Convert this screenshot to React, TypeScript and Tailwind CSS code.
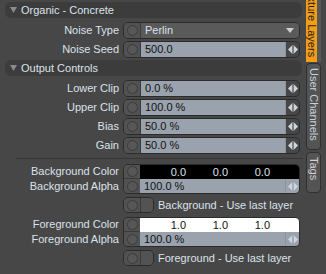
import React from "react";

function CircleBtn({ h = "h-full", last = true }: { h?: string; last?: boolean }) {
  return (
    <div className={`flex ${h} w-[16px] items-center justify-center bg-[#525252] ${last ? "" : "border-b border-[#3a3a3a]"}`}>
      <div className="h-[11px] w-[11px] rounded-full border border-[#3b3b3b] bg-[#575757]" />
    </div>
  );
}

function Arrows() {
  return (
    <div className="flex h-full w-[14px] items-center justify-center border-l border-[#8b949d]">
      <svg width="10" height="9" viewBox="0 0 10 9">
        <path d="M0 4.5 L4 0.5 L4 8.5 Z M6 0.5 L10 4.5 L6 8.5 Z" fill="#cfd5db" />
        <rect x="4.5" y="0" width="1" height="9" fill="#aeb6be" />
      </svg>
    </div>
  );
}

function Header({ title }: { title: string }) {
  return (
    <div className="mx-[5px] flex h-[16px] w-[297px] items-center rounded-[6px] bg-[#3c3c3c]">
      <svg width="7" height="6" viewBox="0 0 7 6" className="ml-[5px]">
        <path d="M0 0 L7 0 L3.5 6 Z" fill="#8a8a8a" />
      </svg>
      <span className="ml-[4px] text-[#dbe2ea]">{title}</span>
    </div>
  );
}

function Label({ children }: { children: React.ReactNode }) {
  return <div className="w-[119px] shrink-0 text-right text-[#dbe2ea]">{children}</div>;
}

function ValueRow({ label, value }: { label: string; value: string }) {
  return (
    <div className="flex h-[17px] items-center">
      <Label>{label}</Label>
      <div className="ml-[4px] flex h-full w-[177px] overflow-hidden rounded-[5px] border border-[#2b2b2b]">
        <div className="border-r border-[#3a3a3a]">
          <CircleBtn />
        </div>
        <div className="flex flex-1 items-center bg-[#9aa3ad] pl-[4px] text-[#111]">{value}</div>
        <Arrows />
      </div>
    </div>
  );
}

function ColorGroup({
  name,
  dark,
  vals,
}: {
  name: string;
  dark: boolean;
  vals: string[];
}) {
  return (
    <div className="flex h-[30px]">
      <div className="flex w-[119px] shrink-0 flex-col text-right text-[#dbe2ea]">
        <div className="flex h-[15px] items-center justify-end">{name} Color</div>
        <div className="flex h-[15px] items-center justify-end">{name} Alpha</div>
      </div>
      <div className="ml-[4px] flex w-[177px] overflow-hidden rounded-[5px] border border-[#2b2b2b]">
        <div className="flex w-[16px] flex-col border-r border-[#3a3a3a]">
          <CircleBtn h="h-[14px]" last={false} />
          <CircleBtn h="h-[14px]" />
        </div>
        <div className="flex flex-1 flex-col">
          <div
            className={`flex h-[14px] items-center ${dark ? "bg-black text-[#dbe2ea]" : "bg-white text-[#111]"}`}
          >
            {vals.map((v, i) => (
              <div key={i} className={`w-[42px] text-right ${i === 0 ? "ml-[4px]" : ""}`}>
                {v}
              </div>
            ))}
          </div>
          <div className="flex h-[14px] bg-[#9aa3ad]">
            <div className="flex flex-1 items-center pl-[4px] text-[#111]">100.0 %</div>
            <Arrows />
          </div>
        </div>
      </div>
    </div>
  );
}

function Check({ text }: { text: string }) {
  return (
    <div className="flex h-[16px] items-center">
      <div className="ml-[123px] flex h-full w-[31px] overflow-hidden rounded-[5px] border border-[#2b2b2b]">
        <div className="border-r border-[#3a3a3a]">
          <CircleBtn />
        </div>
        <div className="flex-1 bg-[#535353]" />
      </div>
      <span className="ml-[4px] text-[#dbe2ea]">{text}</span>
    </div>
  );
}

export default function App() {
  return (
    <div className="flex h-[274px] w-[326px] overflow-hidden bg-[#474747] font-['Liberation_Sans',Arial,sans-serif] text-[11px] leading-none">
      <div className="flex w-[305px] shrink-0 flex-col pt-[2px]">
        <Header title="Organic - Concrete" />
        <div className="mt-[4px] flex h-[17px] items-center">
          <Label>Noise Type</Label>
          <div className="ml-[4px] flex h-full w-[177px] overflow-hidden rounded-[5px] border border-[#2b2b2b]">
            <div className="border-r border-[#3a3a3a]">
              <CircleBtn />
            </div>
            <div className="flex flex-1 items-center justify-between bg-[#5a5a5a] pl-[4px] pr-[5px] text-[#dbe2ea]">
              <span>Perlin</span>
              <svg width="8" height="5" viewBox="0 0 8 5">
                <path d="M0 0 L8 0 L4 5 Z" fill="#cfcfcf" />
              </svg>
            </div>
          </div>
        </div>
        <div className="mt-[2px]">
          <ValueRow label="Noise Seed" value="500.0" />
        </div>
        <div className="mt-[2px]">
          <Header title="Output Controls" />
        </div>
        <div className="mt-[4px] flex flex-col gap-[2px]">
          <ValueRow label="Lower Clip" value="0.0 %" />
          <ValueRow label="Upper Clip" value="100.0 %" />
          <ValueRow label="Bias" value="50.0 %" />
          <ValueRow label="Gain" value="50.0 %" />
        </div>
        <div className="ml-[16px] mr-[2px] mt-[4px] h-[1px] bg-[#363636]" />
        <div className="mt-[5px]">
          <ColorGroup name="Background" dark vals={["0.0", "0.0", "0.0"]} />
        </div>
        <div className="mt-[3px]">
          <Check text="Background - Use last layer" />
        </div>
        <div className="mt-[4px]">
          <ColorGroup name="Foreground" dark={false} vals={["1.0", "1.0", "1.0"]} />
        </div>
        <div className="mt-[3px]">
          <Check text="Foreground - Use last layer" />
        </div>
      </div>
      <div className="flex w-[21px] flex-col pl-[1px]">
        <div className="flex h-[62px] w-[15px] overflow-hidden bg-[#575757]">
          <div className="flex h-full w-[11px] flex-col items-center justify-end bg-[#f39c16] pb-[5px]">
            <span className="whitespace-nowrap text-[#1e1e1e] [writing-mode:vertical-rl]">Texture Layers</span>
          </div>
        </div>
        <div className="mt-[1px] flex h-[87px] w-[15px] flex-col items-center overflow-hidden rounded-[4px] border border-[#303030] bg-[#545454] pt-[4px]">
          <span className="whitespace-nowrap text-[#c9d2dc] [writing-mode:vertical-rl]">User Channels</span>
        </div>
        <div className="mt-[2px] flex h-[41px] w-[15px] flex-col items-center overflow-hidden rounded-[4px] border border-[#303030] bg-[#545454] pt-[4px]">
          <span className="whitespace-nowrap text-[#d9cdd2] [writing-mode:vertical-rl]">Tags</span>
        </div>
      </div>
    </div>
  );
}
